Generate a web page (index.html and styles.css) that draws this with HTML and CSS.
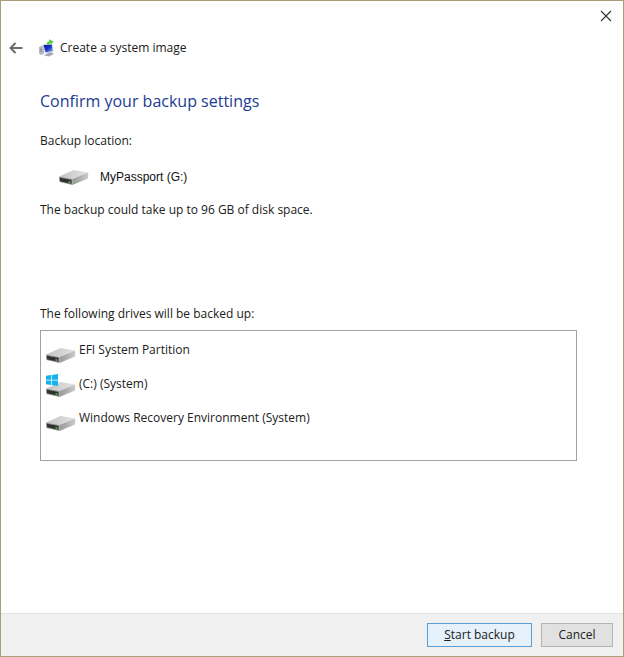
FILE: index.html
```html
<!DOCTYPE html>
<html lang="en">
<head>
<meta charset="utf-8">
<title>Create a system image</title>
<link rel="stylesheet" href="styles.css">
</head>
<body>
<svg class="defs" aria-hidden="true">
  <defs>
    <linearGradient id="top" x1="0" y1="0" x2="1" y2="0"><stop offset="0" stop-color="#c4c4c4"/><stop offset="1" stop-color="#e2e2e2"/></linearGradient>
    <linearGradient id="side" x1="0" y1="0" x2="1" y2="0"><stop offset="0" stop-color="#989898"/><stop offset="1" stop-color="#cacaca"/></linearGradient>
    <linearGradient id="screen" x1="0" y1="0" x2="1" y2="1"><stop offset="0" stop-color="#1018a0"/><stop offset=".5" stop-color="#1830c8"/><stop offset="1" stop-color="#80b8f4"/></linearGradient>
    <symbol id="drive" viewBox="0 0 30 15">
      <path d="M0 6.500 14 0.300 Q15 0 16 0.200L29 2.500 13.500 9z" fill="url(#top)"/>
      <path d="M13.500 9 29 2.500Q29.500 5 29 8.500L13.500 15z" fill="url(#side)"/>
      <path d="M0 6.500 13.500 9V15L0.500 12z" fill="#909090"/>
      <path d="M0.800 7.800 12.500 10.100V13.700L1 11.200z" fill="#303030"/>
      <path d="M9.500 11 11.500 11.400V13L9.500 12.600z" fill="#4fc04f"/>
    </symbol>
  </defs>
</svg>
<main class="window">
  <div class="titlebar">
    <button class="icon-button" type="button" aria-label="Close">
      <svg width="12" height="12" viewBox="0 0 12 12"><path d="M1 1 11 11M11 1 1 11" stroke="#333" stroke-width="1.100" fill="none"/></svg>
    </button>
  </div>
  <header class="header">
    <button class="icon-button" type="button" aria-label="Back">
      <svg width="14" height="12" viewBox="0 0 14 12"><path d="M13.500 6H1.500M6.500 1 1.500 6 6.500 11" stroke="#6c6c6c" stroke-width="2" fill="none"/></svg>
    </button>
    <svg class="app-icon" width="16" height="18" viewBox="0 0 16 18" aria-hidden="true">
      <path d="M0 8 3 6.500 5 8V15L2 16 0 14.500z" fill="#b4bac8"/>
      <path d="M1 10 3 10.500M1 12 3 12.500" stroke="#6d7688" stroke-width=".8"/>
      <path d="M3.500 5.500 13.500 5 14.500 13 6 14.500z" fill="#c8d0e2"/>
      <path d="M4.500 6 12.800 5.800 13.500 12 6.800 13.300z" fill="url(#screen)"/>
      <path d="M9 14 12 13.300 15 15 10 17.500 5 16.500z" fill="#a3a9b6"/>
      <path d="M7.500 5Q8 2.500 10.200 2.200V.300L14.500 2.500 11.800 5.700 11.300 4.200Q10 4.500 10 6z" fill="#53cd40"/>
    </svg>
    <span>Create a system image</span>
  </header>
  <section class="content">
    <h1>Confirm your backup settings</h1>
    <p>Backup location:</p>
    <div class="location">
      <svg width="30" height="15"><use href="#drive"/></svg>
      <span>MyPassport (G:)</span>
    </div>
    <p>The backup could take up to 96 GB of disk space.</p>
    <h2 id="drives">The following drives will be backed up:</h2>
    <ul class="drives" aria-labelledby="drives">
      <li><span class="picture"><svg width="30" height="15"><use href="#drive"/></svg></span><span>EFI System Partition</span></li>
      <li><span class="picture"><svg width="30" height="15"><use href="#drive"/></svg>
        <svg class="logo" width="12" height="12" viewBox="0 0 12 12"><path d="M0 1.700 5 1V5.700H0zM5.700 .900 12 0V5.700H5.700zM0 6.400H5V11L0 10.300zM5.700 6.400H12V12L5.700 11.100z" fill="#16b3ea"/></svg></span><span>(C:) (System)</span></li>
      <li><span class="picture"><svg width="30" height="15"><use href="#drive"/></svg></span><span>Windows Recovery Environment (System)</span></li>
    </ul>
  </section>
  <footer class="footer">
    <button class="button primary" type="button"><u>S</u>tart backup</button>
    <button class="button" type="button">Cancel</button>
  </footer>
</main>
</body>
</html>
```
FILE: styles.css
```css
* { box-sizing: border-box; }
body {
  margin: 0;
  color: #202020;
  background: #fff;
  font: 12px/18px "Open Sans", "Noto Sans", sans-serif;
}
.defs { position: absolute; width: 0; height: 0; }
svg { display: block; flex: none; }
h1, h2, p, ul { margin: 0; padding: 0; font-size: 12px; font-weight: 400; }
.window {
  display: flex;
  flex-direction: column;
  min-height: 100vh;
  border: 1px solid #aa9e78;
}
.titlebar { display: flex; justify-content: flex-end; padding: 8px 10px 0; }
.icon-button { padding: 1px; border: 0; background: none; }
.header {
  display: flex;
  align-items: center;
  height: 18px;
  margin-top: 16px;
  padding-left: 7px;
}
.app-icon { margin: 0 5px 0 15px; }
.content { flex: 1; padding: 32px 46px 24px 39px; }
h1 { color: #1c3c94; font-size: 16px; line-height: 24px; margin-bottom: 19px; }
.location {
  display: flex;
  align-items: center;
  gap: 11px;
  height: 18px;
  margin: 18px 0 15px 19px;
  font-family: "Liberation Sans", Arial, sans-serif;
  color: #111;
}
h2 { margin: 86px 0 7px; line-height: 18px; }
.drives {
  min-height: 131px;
  padding: 10px 5px;
  border: 1px solid #a0a0a0;
  list-style: none;
}
.drives li { display: flex; gap: 3px; height: 34px; }
.picture { position: relative; padding-top: 7px; }
.logo { position: absolute; left: 0; top: -1px; }
.footer {
  display: flex;
  justify-content: flex-end;
  gap: 9px;
  padding: 9px 10px;
  border-top: 1px solid #e2e2e2;
  background: #f0f0f0;
}
.button {
  width: 72px;
  height: 24px;
  padding: 0;
  border: 1px solid #b4b4b4;
  background: #e1e1e1;
  color: #202020;
  font: inherit;
}
.primary { width: 105px; border-color: #5a9ed2; background: #e5f1fb; }
```
